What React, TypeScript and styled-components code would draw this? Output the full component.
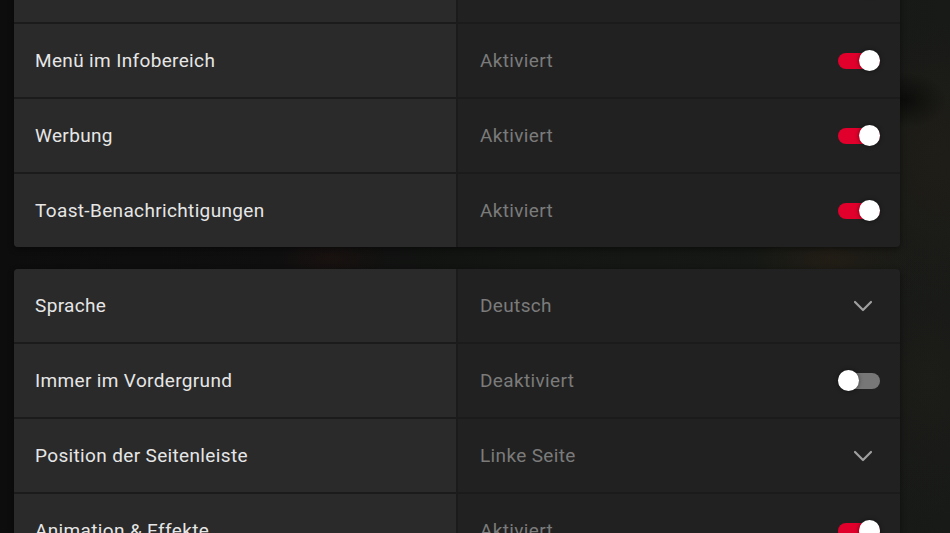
import React from "react";
import styled, { createGlobalStyle } from "styled-components";

const Global = createGlobalStyle`
  html, body {
    margin: 0;
    padding: 0;
    height: 100%;
    overflow: hidden;
  }
  body {
    background:
      radial-gradient(ellipse 60px 40px at 905px 100px, rgba(0,0,0,0.55), transparent 70%),
      radial-gradient(ellipse 120px 80px at 830px 258px, rgba(60,40,20,0.3), transparent 70%),
      radial-gradient(ellipse 80px 40px at 330px 258px, rgba(50,20,15,0.25), transparent 70%),
      radial-gradient(ellipse 140px 200px at 940px 160px, rgba(45,35,22,0.35), transparent 70%),
      radial-gradient(ellipse 120px 200px at 930px 380px, rgba(40,35,25,0.25), transparent 70%),
      linear-gradient(90deg, #0d0d0d 0%, #0f0f0f 30%, #131613 55%, #151815 80%, #181a18 100%);
    font-family: "Roboto", "Liberation Sans", sans-serif;
  }
`;

const Stack = styled.div`
  display: flex;
  flex-direction: column;
  gap: 22px;
  margin-top: -51px;
  padding: 0 50px 0 14px;
`;

const Card = styled.div`
  display: flex;
  flex-direction: column;
  gap: 2px;
  background: #1b1b1b;
  border-radius: 4px;
  overflow: hidden;
  box-shadow: 0 2px 6px rgba(0, 0, 0, 0.45);
`;

const Row = styled.div`
  display: grid;
  grid-template-columns: 442px 1fr;
  column-gap: 2px;
  height: 73px;
`;

const Label = styled.div`
  background: #2a2a2a;
  display: flex;
  align-items: center;
  padding-left: 21px;
  color: #e6e6e6;
  font-size: 19px;
  letter-spacing: 0.35px;
`;

const ValueCell = styled.div`
  background: #212121;
  display: flex;
  align-items: center;
  justify-content: space-between;
  padding: 0 20px 0 22px;
  color: #7b7b7b;
  font-size: 19px;
  letter-spacing: 0.35px;
`;

const Track = styled.div<{ $on: boolean }>`
  position: relative;
  width: 42px;
  height: 16px;
  border-radius: 8px;
  background: ${(p) => (p.$on ? "#e0002b" : "#777777")};
`;

const Knob = styled.div<{ $on: boolean }>`
  position: absolute;
  top: -2.5px;
  left: ${(p) => (p.$on ? "21px" : "0")};
  width: 21px;
  height: 21px;
  border-radius: 50%;
  background: #ffffff;
  box-shadow: 0 0 4px rgba(0, 0, 0, 0.5);
`;

const ChevronBox = styled.div`
  width: 25px;
  display: flex;
  justify-content: flex-start;
  margin-right: 2px;
`;

const Toggle = ({ on }: { on: boolean }) => (
  <Track $on={on}>
    <Knob $on={on} />
  </Track>
);

const Chevron = () => (
  <ChevronBox>
    <svg width="20" height="12" viewBox="0 0 20 12">
      <path d="M2 2 L10 10 L18 2" fill="none" stroke="#a0a0a0" strokeWidth="2.2" strokeLinecap="round" strokeLinejoin="round" />
    </svg>
  </ChevronBox>
);

type Item = { label: string; value: string; control: "on" | "off" | "select" };

const card1: Item[] = [
  { label: "", value: "", control: "on" },
  { label: "Menü im Infobereich", value: "Aktiviert", control: "on" },
  { label: "Werbung", value: "Aktiviert", control: "on" },
  { label: "Toast-Benachrichtigungen", value: "Aktiviert", control: "on" },
];

const card2: Item[] = [
  { label: "Sprache", value: "Deutsch", control: "select" },
  { label: "Immer im Vordergrund", value: "Deaktiviert", control: "off" },
  { label: "Position der Seitenleiste", value: "Linke Seite", control: "select" },
  { label: "Animation & Effekte", value: "Aktiviert", control: "on" },
];

const SettingsCard = ({ items }: { items: Item[] }) => (
  <Card>
    {items.map((it, i) => (
      <Row key={i}>
        <Label>{it.label}</Label>
        <ValueCell>
          <span>{it.value}</span>
          {it.control === "select" ? <Chevron /> : <Toggle on={it.control === "on"} />}
        </ValueCell>
      </Row>
    ))}
  </Card>
);

export default function App() {
  return (
    <>
      <Global />
      <Stack>
        <SettingsCard items={card1} />
        <SettingsCard items={card2} />
      </Stack>
    </>
  );
}
